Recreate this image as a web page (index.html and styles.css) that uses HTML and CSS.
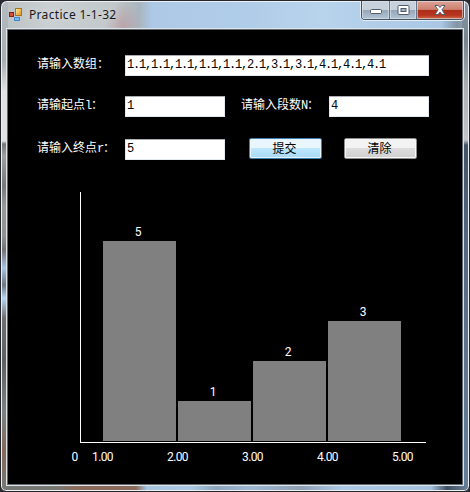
FILE: index.html
```
<!DOCTYPE html>
<html lang="zh-CN">
<head>
<meta charset="utf-8">
<title>Practice 1-1-32</title>
<link rel="stylesheet" href="styles.css">
</head>
<body>
<div class="window">
  <header class="titlebar">
    <svg class="app-icon" width="14" height="14" viewBox="0 0 14 14">
      <defs>
        <linearGradient id="gold" x1="0" y1="0" x2="1" y2="1"><stop offset="0" stop-color="#fff0a8"/><stop offset="1" stop-color="#e08a10"/></linearGradient>
      </defs>
      <rect x="6.5" y=".5" width="6" height="7" fill="url(#gold)" stroke="#a87420"/>
      <rect x=".5" y="4.500" width="4" height="4" fill="#d85038" stroke="#8c1c18"/>
      <rect x="5.500" y="9.500" width="5" height="3" fill="#70b8f8" stroke="#4488d0"/>
    </svg>
    <span class="title">Practice 1-1-32</span>
    <div class="controls">
      <span class="control min"><svg width="14" height="12" viewBox="0 0 14 12"><rect x="1.500" y="5.500" width="11" height="4" rx="1" fill="#fff" stroke="#525a6c"/></svg></span>
      <span class="control max"><svg width="13" height="12" viewBox="0 0 13 12"><rect x="1" y="1.500" width="11" height="9" rx="1" fill="#fff" stroke="#525a6c"/><rect x="4" y="4.500" width="5" height="3" fill="#9eb1c8" stroke="#525a6c"/></svg></span>
      <span class="control close"><svg width="14" height="12" viewBox="0 0 14 12"><path d="M2 1.500h3.200L7 3.500l1.800-2H12L9 5.800l3 4.700H8.800L7 8.200l-1.800 2.300H2l3-4.700z" fill="#fff" stroke="#525a6c"/></svg></span>
    </div>
  </header>
  <main class="client">
    <form class="form">
      <div class="row">
        <label class="label" for="numbers">请输入数组：</label>
        <input class="field wide" id="numbers" value="1.1,1.1,1.1,1.1,1.1,2.1,3.1,3.1,4.1,4.1,4.1">
      </div>
      <div class="row">
        <label class="label" for="start">请输起点<span class="latin">l</span>：</label>
        <input class="field" id="start" value="1">
        <label class="label second" for="count">请输入段数<span class="latin">N</span>：</label>
        <input class="field" id="count" value="4">
      </div>
      <div class="row last">
        <label class="label" for="end">请输入终点<span class="latin">r</span>：</label>
        <input class="field" id="end" value="5">
        <button class="button primary" type="button">提交</button>
        <button class="button" type="button">清除</button>
      </div>
    </form>
    <section class="chart">
      <div class="plot">
        <div class="bin"><span>5</span><div class="bar" style="height:200px"></div></div>
        <div class="bin"><span>1</span><div class="bar" style="height:40px"></div></div>
        <div class="bin"><span>2</span><div class="bar" style="height:80px"></div></div>
        <div class="bin"><span>3</span><div class="bar" style="height:120px"></div></div>
      </div>
      <div class="ticks"><span class="zero">0</span><span>1.00</span><span>2.00</span><span>3.00</span><span>4.00</span><span>5.00</span></div>
    </section>
  </main>
</div>
</body>
</html>
```
FILE: styles.css
```
* { box-sizing: border-box; }
body { margin: 0; background: #292b30; overflow: hidden; }
.window {
  width: 470px;
  height: 492px;
  border: 1px solid #25272d;
  border-radius: 7px 7px 6px 6px;
  padding: 0 5px 4px;
  box-shadow: inset 0 0 0 1px #eef1f4;
  background:
    linear-gradient(90deg, #777873 0, #777873 55px, #8b6c5c 75px, #8b6c5c 135px, #a5c5e1 146px, #a9c9e5 190px, #8fa5bd 215px, #9cb8d2 250px, #8fa0b4 300px, #acc9e6 340px, #a5c1de 430px, #405062 446px, #6b819b 468px) 0 100% / 100% 6px no-repeat,
    linear-gradient(#b5bcc2 0, #a7aeb2 60px, #e2e2e2 90px, #e2e2e2 140px, #747879 143px, #9ca19e 155px, #77787a 185px, #969b97 205px, #8e9390 235px, #737373 249px, #a7c4e5 267px, #6b7684 284px, #b6d6f4 297px, #706f70 317px, #5d605f 360px, #7a8280 410px, #82695c 450px, #767873) 0 0 / 7px 100% no-repeat,
    linear-gradient(#8698a8 0, #758490 40px, #a9afb3 85px, #c1c5c9 139px, #435467 144px, #53687f 240px, #60758d 360px, #657e99) 100% 0 / 7px 100% no-repeat,
    radial-gradient(ellipse at 122px 25px, #ba929899 0, #ba929800 18px),
    linear-gradient(90deg, #bcc2c4 0, #cbd0d2 50px, #c1c7ca 115px, #a9b5be 138px, #adc9e6 151px, #afcce8 240px, #b8d3ec 320px, #a9c7e5 440px, #8395a5 456px, #9ba7b3);
}
.titlebar { height: 27px; display: flex; align-items: flex-start; padding-left: 3px; }
.app-icon { margin-top: 7px; }
.title { margin: 5px 0 0 6px; font: 12px/17px "Noto Sans", "Open Sans", sans-serif; letter-spacing: .32px; color: #15191d; text-shadow: 0 0 7px #fff9; }
.controls {
  margin-left: auto;
  height: 19px;
  display: flex;
  border: 1px solid #485360;
  border-top: 0;
  border-radius: 0 0 4px 4px;
  box-shadow: 0 1px 0 #e4eef7, 1px 0 0 #e4eef7, -1px 0 0 #e4eef7;
  overflow: hidden;
}
.control { display: flex; align-items: center; justify-content: center; height: 18px; box-shadow: inset 0 0 0 1px #dce7f099; background: linear-gradient(#c7d1dc 0 48%, #94a6b8 50%, #b3c4d5); }
.control.min, .control.max { border-right: 1px solid #667484; }
.min { width: 28px; }
.max { width: 27px; }
.control.close { width: 46px; background: linear-gradient(#dfa396 0, #cc806f 47%, #ae2d19 50%, #b73620 80%, #d16f4f); }
.client {
  height: 456px;
  background: #000;
  border: 1px solid #606870;
  box-shadow: 0 0 0 1px #dfe4e6;
  margin: 1px 1px 0 1px;
  padding-top: 25px;
}
.form { padding-left: 29px; color: #fff; }
.row { display: flex; align-items: flex-start; height: 21px; margin-bottom: 20px; }
.row.last { margin: 22px 0 0; }
.label { width: 88px; padding-top: 3px; white-space: nowrap; font: 12px/15px "Liberation Mono", "Noto Sans CJK SC", monospace; }
.label.second { margin-left: 16px; }
.latin { letter-spacing: -1.2px; }
.field {
  width: 100px;
  height: 21px;
  margin: 0;
  padding: 0 1px 1px;
  border: 1px solid #e2e9f1;
  border-top-color: #abadb3;
  border-radius: 1px;
  background: #fff;
  color: #000;
  font: 12px/15px "Liberation Mono", monospace;
  letter-spacing: -1.2px;
}
.field.wide { width: 304px; }
.button {
  width: 73px;
  height: 21px;
  margin: -1px 0 0 22px;
  padding: 0 2px 2px 0;
  border: 1px solid #8b8b8b;
  border-radius: 2px;
  color: #000;
  font: 12px/15px "Noto Sans CJK SC", sans-serif;
  background: linear-gradient(#f3f3f3 0 47%, #dddddd 50%, #cfcfcf);
  box-shadow: inset 0 0 0 1px #f8f8f8;
}
.button.primary { margin-left: 24px; border-color: #3c7fb1; background: linear-gradient(#eaf6fd 0 47%, #bee6fd 50%, #a7d9f5); box-shadow: inset 0 0 0 1px #e7f6fe; }
.chart { margin: 32px 0 0 72px; width: 346px; color: #fff; font: 12px/16px Roboto, sans-serif; }
.plot { display: flex; align-items: flex-end; gap: 2px; height: 251px; padding: 0 0 0 22px; border-left: 1px solid #fff; border-bottom: 1px solid #fff; }
.bin { width: 73px; text-align: center; padding-bottom: 1px; }
.bin span { display: block; padding-right: 3px; margin-bottom: 1px; }
.bar { background: #808080; }
.ticks { display: flex; margin: 6px 0 0 -15px; letter-spacing: -.6px; }
.ticks span { flex: 0 0 75px; text-align: center; }
.ticks .zero { flex-basis: 19px; margin-right: -19px; }
.ticks .zero + span { flex-basis: 75px; }
```
